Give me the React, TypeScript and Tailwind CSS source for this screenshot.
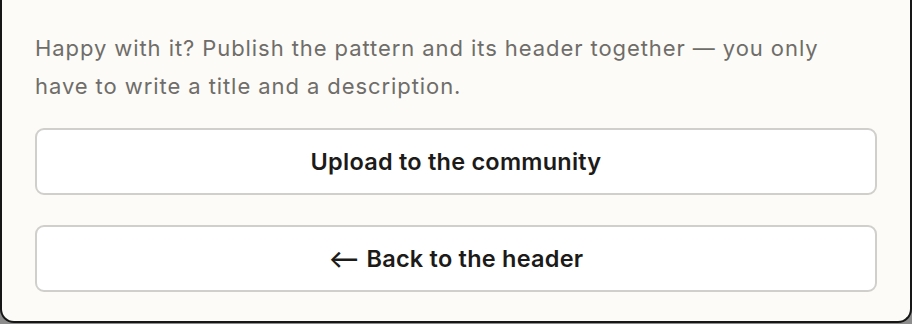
import React from 'react';

export default function App() {
  return (
    <div className="w-[912px] h-[324px] overflow-hidden bg-[#8c8c8c]" style={{ fontFamily: 'Inter, "Noto Sans", sans-serif' }}>
      <div className="h-[323px] bg-[#fcfbf7] border-x-2 border-b-2 border-[#161616] rounded-b-[14px] px-[33px] pt-[29px]">
        <p className="text-[22px] leading-[38px] tracking-[0.042em] text-[#6f6d69]">
          Happy with it? Publish the pattern and its header together — you only have to write a title and a description.
        </p>
        <div className="mt-[23px] flex flex-col gap-[30px]">
          <button className="h-[67px] w-full rounded-[9px] border-2 border-[#d0cfcc] bg-white text-[23.5px] font-semibold tracking-[0.01em] text-[#1c1b19]">
            Upload to the community
          </button>
          <button className="h-[67px] w-full rounded-[9px] border-2 border-[#d0cfcc] bg-white text-[23.5px] font-semibold tracking-[0.01em] text-[#1c1b19]">
            ⟵ Back to the header
          </button>
        </div>
      </div>
    </div>
  );
}
